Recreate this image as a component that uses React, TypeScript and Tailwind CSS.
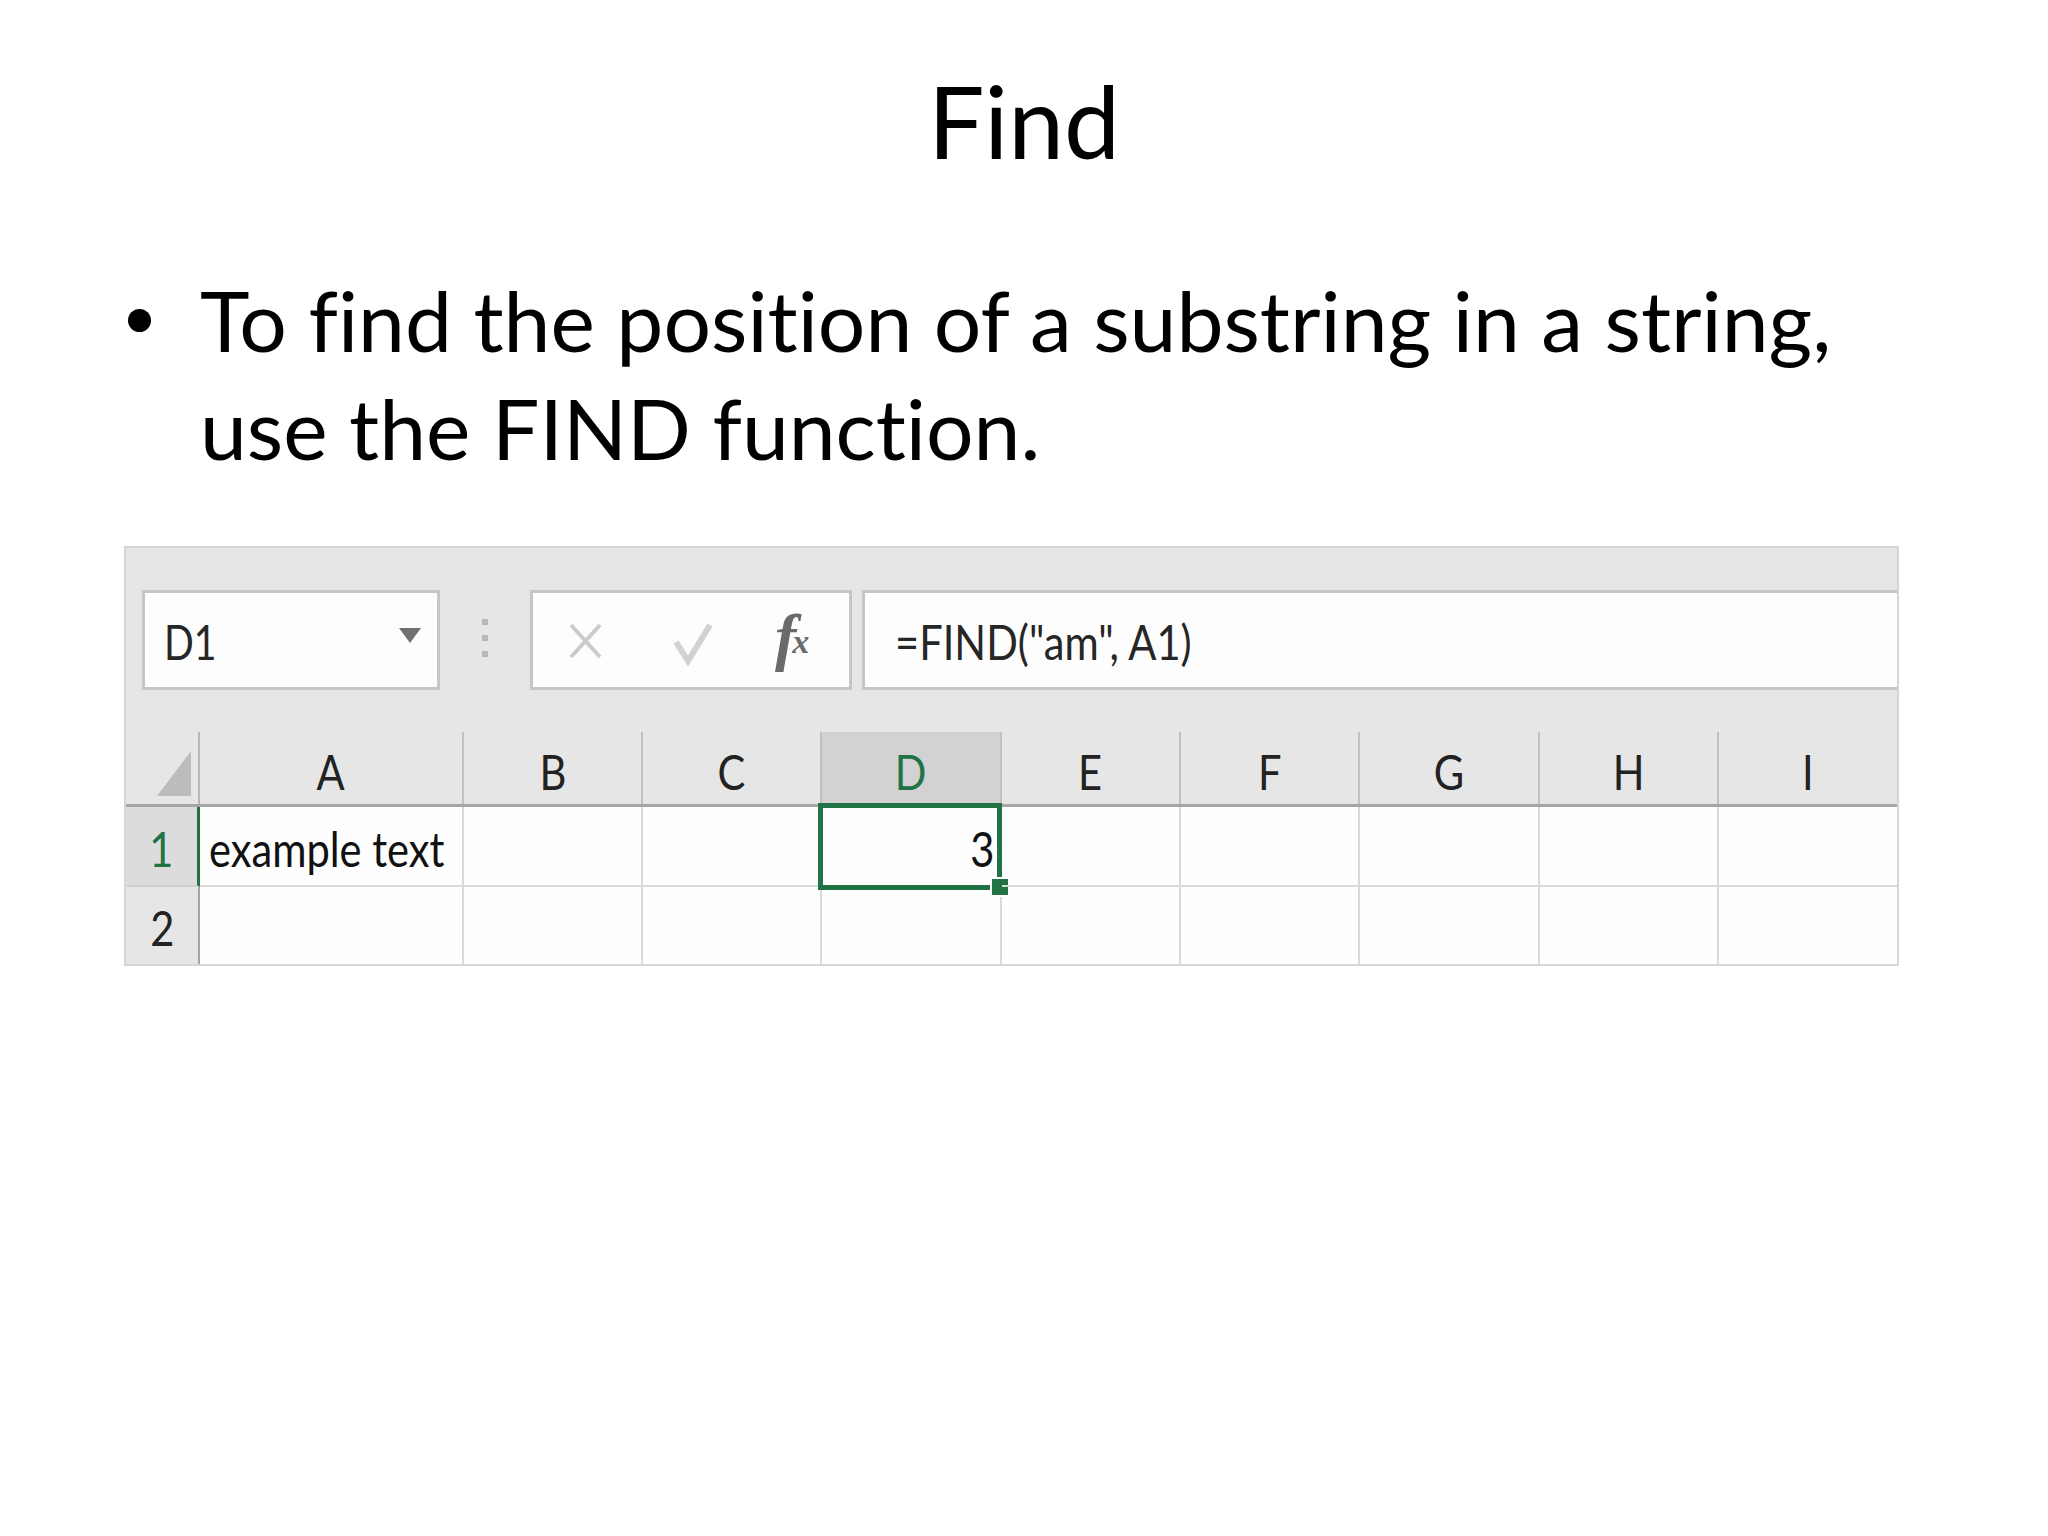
import React from "react";

const cols = [
  { l: "A", w: "w-[264px]" },
  { l: "B", w: "w-[179px]" },
  { l: "C", w: "w-[179px]" },
  { l: "D", w: "w-[180px]" },
  { l: "E", w: "w-[179px]" },
  { l: "F", w: "w-[179px]" },
  { l: "G", w: "w-[180px]" },
  { l: "H", w: "w-[179px]" },
  { l: "I", w: "flex-1" },
];

function NameBox() {
  return (
    <div className="w-[298px] border-[3px] border-[#c6c6c6] bg-[#fdfdfd] flex items-start justify-between pl-[19px] pr-[16px]">
      <span className="mt-[24px] text-[49px] leading-[49px] text-[#262626] inline-block scale-x-[0.8] origin-left">D1</span>
      <svg width="22" height="15" viewBox="0 0 22 15" className="mt-[35px]">
        <polygon points="0,0 22,0 11,15" fill="#707070" />
      </svg>
    </div>
  );
}

function Buttons() {
  return (
    <div className="w-[322px] border-[3px] border-[#c6c6c6] bg-[#fdfdfd] flex items-start">
      <svg width="35" height="38" viewBox="0 0 35 38" className="ml-[35px] mt-[29px]">
        <path d="M3 3 L32 35 M32 3 L3 35" stroke="#cbcbcb" strokeWidth="4" fill="none" />
      </svg>
      <svg width="40" height="44" viewBox="0 0 40 44" className="ml-[70px] mt-[29px]">
        <path d="M3 20 L15 39 L37 3" stroke="#d2d2d2" strokeWidth="6" fill="none" />
      </svg>
      <div className="ml-[62px] mt-[12px] flex items-end text-[#6a6a6a] font-['Liberation_Serif',serif] italic">
        <span className="text-[64px] leading-[64px] font-bold">f</span>
        <span className="text-[34px] leading-[34px] -ml-[4px] mb-[10px] font-bold">x</span>
      </div>
    </div>
  );
}

function FormulaBox() {
  return (
    <div className="ml-[10px] flex-1 border-y-[3px] border-l-[3px] border-[#c6c6c6] bg-[#fdfdfd] pl-[30px]">
      <span className="mt-[24px] text-[49px] leading-[49px] text-[#262626] inline-block scale-x-[0.85] origin-left">
        =FIND("am", A1)
      </span>
    </div>
  );
}

function Dots() {
  return (
    <div className="ml-[42px] mr-[42px] w-[6px] flex flex-col gap-[10px] pt-[29px]">
      <div className="w-[6px] h-[6px] bg-[#b8b8b8]" />
      <div className="w-[6px] h-[6px] bg-[#b8b8b8]" />
      <div className="w-[6px] h-[6px] bg-[#b8b8b8]" />
    </div>
  );
}

function Sheet() {
  return (
    <div className="mt-[64px] ml-[124px] w-[1775px] h-[420px] border-2 border-[#d6d6d6] bg-[#e6e6e6] flex flex-col font-['Lato',sans-serif]">
      {/* formula bar */}
      <div className="mt-[42px] h-[100px] flex pl-[16px]">
        <NameBox />
        <Dots />
        <Buttons />
        <FormulaBox />
      </div>
      {/* header row */}
      <div className="mt-[42px] h-[75px] flex border-b-[3px] border-[#a6a6a6]">
        <div className="w-[74px] border-r-2 border-[#b8b8b8] flex items-end justify-end pr-[7px] pb-[8px]">
          <svg width="34" height="45" viewBox="0 0 34 45">
            <polygon points="34,0 34,45 0,45" fill="#bcbcbc" />
          </svg>
        </div>
        {cols.map((c, i) => (
          <div
            key={c.l}
            className={`${c.w} ${i < cols.length - 1 ? "border-r-2 border-[#c0c0c0]" : ""} ${
              c.l === "D" ? "bg-[#d2d2d2] text-[#217346]" : "text-[#222222]"
            } flex justify-center pt-[15px]`}
          >
            <span className="text-[49px] leading-[49px] inline-block scale-x-[0.85]">{c.l}</span>
          </div>
        ))}
      </div>
      {/* row 1 */}
      <div className="h-[80px] flex bg-[#fefefe]">
        <div className="w-[74px] bg-[#dcdcdc] border-r-[3px] border-r-[#217346] border-b-2 border-b-[#d0d0d0] flex justify-center pt-[17px] text-[#217346]">
          <span className="text-[49px] leading-[49px] inline-block scale-x-[0.85]">1</span>
        </div>
        {cols.map((c, i) => (
          <div
            key={c.l}
            className={`${c.w} relative border-b-2 border-[#dadada] ${i < cols.length - 1 ? "border-r-2" : ""} flex pt-[17px] ${
              c.l === "D" ? "justify-end pr-[6px]" : "pl-[9px]"
            }`}
          >
            {c.l === "A" && (
              <span className="text-[49px] leading-[49px] text-[#111] whitespace-nowrap inline-block scale-x-[0.85] origin-left">
                example text
              </span>
            )}
            {c.l === "D" && (
              <>
                <span className="text-[49px] leading-[49px] text-[#111] inline-block scale-x-[0.85] origin-right">3</span>
                <div className="absolute -left-[4px] -right-[2px] -top-[4px] -bottom-[5px] border-[5px] border-[#217346]" />
                <div className="absolute -right-[10px] -bottom-[12px] w-[20px] h-[20px] bg-[#217346] border-[2px] border-white" />
              </>
            )}
          </div>
        ))}
      </div>
      {/* row 2 */}
      <div className="flex-1 flex bg-[#fefefe]">
        <div className="w-[74px] bg-[#e6e6e6] border-r-2 border-[#a6a6a6] flex justify-center pt-[16px] text-[#222]">
          <span className="text-[49px] leading-[49px] inline-block scale-x-[0.85]">2</span>
        </div>
        {cols.map((c, i) => (
          <div key={c.l} className={`${c.w} ${i < cols.length - 1 ? "border-r-2 border-[#dadada]" : ""}`} />
        ))}
      </div>
    </div>
  );
}

export default function App() {
  return (
    <div className="w-[2048px] h-[1536px] bg-white overflow-hidden font-['Lato',sans-serif] text-black">
      <h1 className="pt-[60px] text-center text-[100px] leading-[120px] font-normal">Find</h1>
      <div className="mt-[86px] flex pl-[128px]">
        <div className="mt-[43px] w-[23px] h-[23px] rounded-full bg-black shrink-0" />
        <p className="ml-[49px] text-[84px] leading-[108px] whitespace-nowrap [font-variant-ligatures:none]">
          To find the position of a substring in a string,
          <br />
          use the FIND function.
        </p>
      </div>
      <Sheet />
    </div>
  );
}
